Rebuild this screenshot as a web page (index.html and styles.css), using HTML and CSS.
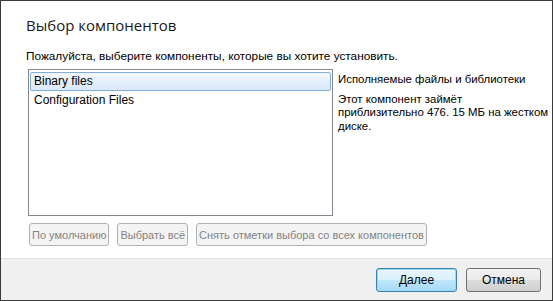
FILE: index.html
```html
<!DOCTYPE html>
<html lang="ru">

<head>
    <meta charset="UTF-8">
    <title>Выбор компонентов</title>
    <link rel="stylesheet" href="styles.css">
</head>

<body>
    <div class="dialog">
        <div class="content">
            <h1 class="title">Выбор компонентов</h1>
            <p class="lead">Пожалуйста, выберите компоненты, которые вы хотите установить.</p>
            <div class="main">
                <ul class="list">
                    <li class="item selected">Binary files</li>
                    <li class="item">Configuration Files</li>
                </ul>
                <div class="desc">
                    <p>Исполняемые файлы и библиотеки</p>
                    <p>Этот компонент займёт<br>приблизительно 476. 15 МБ на жестком<br>диске.</p>
                </div>
            </div>
            <div class="actions">
                <button class="btn" disabled>По умолчанию</button>
                <button class="btn" disabled>Выбрать всё</button>
                <button class="btn" disabled>Снять отметки выбора со всех компонентов</button>
            </div>
        </div>
        <div class="footer">
            <button class="btn big focus">Далее</button>
            <button class="btn big">Отмена</button>
        </div>
    </div>
</body>

</html>
```

FILE: styles.css
```css
* {
    margin: 0;
    padding: 0;
    box-sizing: border-box;
}

ul {
    list-style: none;
}

body {
    width: 553px;
    height: 301px;
    font-family: "Liberation Sans", Arial, sans-serif;
    font-size: 12px;
    color: #000;
}

.dialog {
    width: 553px;
    height: 301px;
    border: 1px solid #3a3a3a;
    display: flex;
    flex-direction: column;
    background: #fff;
}

.content {
    flex: 1;
    padding: 14px 0 0 25px;
}

.title {
    font-family: "Open Sans", sans-serif;
    font-weight: normal;
    font-size: 15px;
    color: #1a1a1a;
    line-height: 20px;
}

.lead {
    margin-top: 14px;
    line-height: 14px;
    font-size: 11.8px;
}

.main {
    display: flex;
    margin-top: 6px;
    margin-left: 2px;
    height: 147px;
}

.list {
    width: 305px;
    height: 147px;
    border: 1px solid #828790;
    padding: 2px 1px;
}

.list .item {
    height: 19px;
    line-height: 17px;
    padding-left: 3px;
    border: 1px solid transparent;
    border-radius: 2px;
}

.list .item.selected {
    border-color: #84acdd;
    background: linear-gradient(#f2f8fe, #d8e8fb);
}

.desc {
    flex: 1;
    padding-left: 5px;
    font-size: 11.4px;
    line-height: 13.5px;
    white-space: nowrap;
}

.desc p {
    margin-top: 4px;
    margin-bottom: 6px;
}

.actions {
    display: flex;
    gap: 8px;
    margin-top: 7px;
    margin-left: 3px;
}

.btn {
    font-family: "Liberation Sans", Arial, sans-serif;
    font-size: 11px;
    height: 23px;
    padding: 0 2px;
    border: 1px solid #adb2b5;
    border-radius: 3px;
    background: #f4f4f4;
    color: #838383;
}

.footer {
    height: 42px;
    border-top: 1px solid #dfdfdf;
    background: #f0f0f0;
    display: flex;
    justify-content: flex-end;
    align-items: center;
    gap: 9px;
    padding-right: 11px;
}

.btn.big {
    width: 75px;
    height: 24px;
    font-size: 12px;
    color: #000;
    border-color: #707070;
    background: linear-gradient(#f2f2f2 0%, #ebebeb 50%, #dddddd 51%, #cfcfcf 100%);
}

.btn.focus {
    width: 81px;
    border-color: #3c7fb1;
    box-shadow: inset 0 0 0 1px #9ad8f4;
    background: linear-gradient(#eaf6fd 0%, #d9f0fc 50%, #bee6fd 51%, #a7d9f5 100%);
}
```
